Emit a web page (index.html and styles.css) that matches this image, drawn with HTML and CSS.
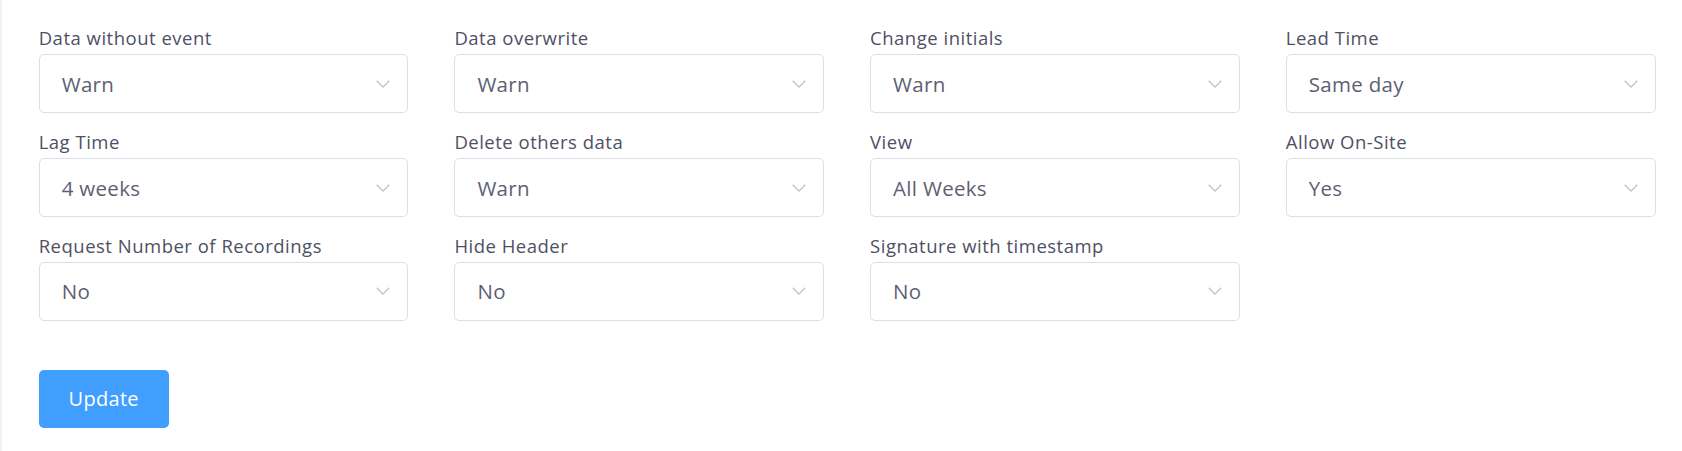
FILE: index.html
```html
<!DOCTYPE html>
<html lang="en">
<head>
<meta charset="utf-8">
<title>Settings</title>
<link rel="stylesheet" href="styles.css">
</head>
<body>
<div class="page">
  <form class="form">
    <div class="grid">
      <div class="field"><label class="label">Data without event</label><div class="select"><span class="value">Warn</span><svg class="arrow" viewBox="0 0 14 8"><polyline points="0.7,0.7 7,7 13.3,0.7"/></svg></div></div>
      <div class="field"><label class="label">Data overwrite</label><div class="select"><span class="value">Warn</span><svg class="arrow" viewBox="0 0 14 8"><polyline points="0.7,0.7 7,7 13.3,0.7"/></svg></div></div>
      <div class="field"><label class="label">Change initials</label><div class="select"><span class="value">Warn</span><svg class="arrow" viewBox="0 0 14 8"><polyline points="0.7,0.7 7,7 13.3,0.7"/></svg></div></div>
      <div class="field"><label class="label">Lead Time</label><div class="select"><span class="value">Same day</span><svg class="arrow" viewBox="0 0 14 8"><polyline points="0.7,0.7 7,7 13.3,0.7"/></svg></div></div>
      <div class="field"><label class="label">Lag Time</label><div class="select"><span class="value">4 weeks</span><svg class="arrow" viewBox="0 0 14 8"><polyline points="0.7,0.7 7,7 13.3,0.7"/></svg></div></div>
      <div class="field"><label class="label">Delete others data</label><div class="select"><span class="value">Warn</span><svg class="arrow" viewBox="0 0 14 8"><polyline points="0.7,0.7 7,7 13.3,0.7"/></svg></div></div>
      <div class="field"><label class="label">View</label><div class="select"><span class="value">All Weeks</span><svg class="arrow" viewBox="0 0 14 8"><polyline points="0.7,0.7 7,7 13.3,0.7"/></svg></div></div>
      <div class="field"><label class="label">Allow On-Site</label><div class="select"><span class="value">Yes</span><svg class="arrow" viewBox="0 0 14 8"><polyline points="0.7,0.7 7,7 13.3,0.7"/></svg></div></div>
      <div class="field"><label class="label">Request Number of Recordings</label><div class="select"><span class="value">No</span><svg class="arrow" viewBox="0 0 14 8"><polyline points="0.7,0.7 7,7 13.3,0.7"/></svg></div></div>
      <div class="field"><label class="label">Hide Header</label><div class="select"><span class="value">No</span><svg class="arrow" viewBox="0 0 14 8"><polyline points="0.7,0.7 7,7 13.3,0.7"/></svg></div></div>
      <div class="field"><label class="label">Signature with timestamp</label><div class="select"><span class="value">No</span><svg class="arrow" viewBox="0 0 14 8"><polyline points="0.7,0.7 7,7 13.3,0.7"/></svg></div></div>
    </div>
    <button type="button" class="btn">Update</button>
  </form>
</div>
</body>
</html>
```
FILE: styles.css
```css
html, body {
  margin: 0;
  padding: 0;
  background: #ffffff;
}
.page {
  box-sizing: border-box;
  height: 451px;
  border-left: 2px solid #f2f2f4;
  padding: 26px 26.5px 0 36.7px;
  font-family: "Open Sans", Lato, sans-serif;
}
.grid {
  display: grid;
  grid-template-columns: repeat(4, 1fr);
  column-gap: 46px;
  row-gap: 16.5px;
}
.field {
  display: flex;
  flex-direction: column;
}
.label {
  font-size: 18.5px;
  letter-spacing: 0.5px;
  line-height: 24px;
  color: #4f5064;
  margin-bottom: 4.3px;
}
.select {
  box-sizing: border-box;
  height: 59px;
  border: 1px solid #dcdfe6;
  border-radius: 5px;
  display: flex;
  align-items: center;
  justify-content: space-between;
  padding: 0 17px 0 22px;
}
.value {
  font-size: 20.5px;
  letter-spacing: 0.3px;
  color: #5e6072;
}
.arrow {
  width: 14px;
  height: 8px;
  fill: none;
  stroke: #c0c4cc;
  stroke-width: 1.3;
}
.btn {
  display: block;
  margin-top: 49px;
  width: 130px;
  height: 58px;
  border: none;
  border-radius: 5px;
  background: #409eff;
  color: #ffffff;
  font-family: "Open Sans", Lato, sans-serif;
  font-size: 20px;
  letter-spacing: 0.3px;
  padding: 0;
}
```
